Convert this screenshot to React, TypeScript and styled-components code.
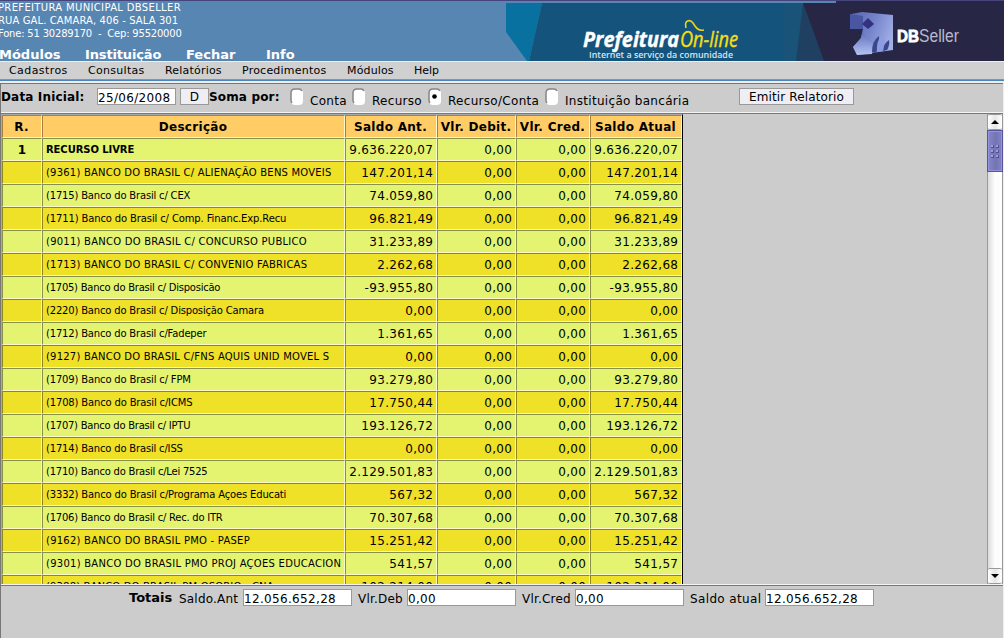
import React from "react";
import styled, { createGlobalStyle } from "styled-components";

const Global = createGlobalStyle`
  * { box-sizing: border-box; }
  body { margin: 0; overflow: hidden; background: #ccc; }
`;

const Page = styled.div`
  display: flex;
  flex-direction: column;
  width: 1004px;
  height: 638px;
  overflow: hidden;
  background: #ccc;
  color: #000;
  font: 13px/16px "DejaVu Sans", Verdana, sans-serif;
  white-space: pre;
`;

const Banner = styled.header`
  display: flex;
  justify-content: space-between;
  height: 61px;
  flex: none;
  border-top: 1px solid #45457b;
  background: #5886b2;
  color: #fff;
`;

const BannerInfo = styled.div`
  display: flex;
  flex-direction: column;
  margin-left: -1px;
`;

const Address = styled.div`
  height: 47px;
  flex: none;
  margin-left: -1px;
  font-size: 10px;
  line-height: 13px;
`;

const AddressLine = styled.div<{ $ls: number }>`
  letter-spacing: ${(p) => p.$ls}px;
`;

const MainMenu = styled.nav`
  display: flex;
  height: 13px;
  font-weight: bold;
  font-size: 13px;
  line-height: 14px;
`;

const MainItem = styled.span<{ $w: number; $ls?: number }>`
  width: ${(p) => p.$w}px;
  letter-spacing: ${(p) => p.$ls ?? 0}px;
`;

const SubMenu = styled.nav`
  display: flex;
  height: 19px;
  flex: none;
  padding: 1px 0 0 9px;
  border-top: 1px solid #eee;
  border-bottom: 1px solid #929292;
  background: #d0d0d0;
  font-size: 11px;
  line-height: 16px;
`;

const SubItem = styled.span<{ $w: number; $ls?: number }>`
  width: ${(p) => p.$w}px;
  letter-spacing: ${(p) => p.$ls ?? 0}px;
`;

const Divider = styled.div`
  height: 3px;
  flex: none;
  border-top: 1px solid #4c84b8;
  background: #eee;
`;

const Frame = styled.main`
  display: flex;
  flex-direction: column;
  flex: 1;
  min-height: 0;
  border-left: 1px solid #777;
  border-right: 1px solid #eee;
`;

const Toolbar = styled.form`
  display: flex;
  height: 30px;
  flex: none;
  border-top: 1px solid #777;
  border-bottom: 1px solid #f4f4f4;
`;

const ToolLabel = styled.b<{ $w: number }>`
  width: ${(p) => p.$w}px;
  padding-top: 5px;
  font-size: 12px;
  letter-spacing: 0.16px;
`;

const Field = styled.input<{ $w: number }>`
  width: ${(p) => p.$w}px;
  height: 17px;
  padding: 2px 0 0;
  border: 1px solid #999;
  border-radius: 0;
  outline: 0;
  background: #fff;
  color: #000;
  font: 12px/13px "DejaVu Sans", sans-serif;
  letter-spacing: 0.33px;
`;

const DateField = styled(Field)`
  margin: 4px 4px 0 0;
`;

const Button = styled.button<{ $w: number; $ml?: number }>`
  width: ${(p) => p.$w}px;
  height: 17px;
  margin: 4px 0 0 ${(p) => p.$ml ?? 0}px;
  padding: 2px 0 0;
  border: 1px solid #999;
  border-radius: 0;
  background: #eeeef4;
  color: #000;
  font: 12px/13px "DejaVu Sans", sans-serif;
  letter-spacing: 0.12px;
`;

const Option = styled.label<{ $w: number }>`
  display: flex;
  gap: 6px;
  width: ${(p) => p.$w}px;
  padding-top: 4px;
`;

const Radio = styled.span`
  display: block;
  width: 14px;
  height: 17px;
  svg { display: block; }
`;

const OptionText = styled.span`
  padding-top: 5px;
  font-size: 12px;
  letter-spacing: 0.3px;
`;

const Viewport = styled.section`
  display: flex;
  justify-content: space-between;
  height: 471px;
  flex: none;
  overflow: hidden;
  border-top: 1px solid #777;
`;

const Table = styled.div`
  width: 682px;
  height: 470px;
  overflow: hidden;
  border-top: 1px solid #aaa;
  border-left: 1px solid #aaa;
  border-right: 1px solid #000;
`;

const Row = styled.div`
  display: grid;
  grid-template-columns: 40px 303px 92px 79px 74px 92px;
  height: 23px;
`;

type Tone = "head" | "odd" | "even";
const fills: Record<Tone, string> = { head: "#ffcc66", odd: "#e4f471", even: "#efe028" };
const shades: Record<Tone, string> = { head: "#a87f3c", odd: "#87914a", even: "#8f861f" };

const Cell = styled.div<{ $tone: Tone; $align?: string; $bold?: boolean }>`
  overflow: hidden;
  padding: 3px 2.7px 0 3px;
  border: 1px solid;
  border-color: ${(p) => `${shades[p.$tone]} #fbf8d0 #fbf8d0 ${shades[p.$tone]}`};
  background: ${(p) => fills[p.$tone]};
  text-align: ${(p) => p.$align ?? "right"};
  font-weight: ${(p) => (p.$bold ? "bold" : "normal")};
  font-size: 12px;
  letter-spacing: 0.33px;
`;

const HeadCell = styled(Cell)`
  padding: 3px 1px 0 0;
  letter-spacing: 0.3px;
`;

const Description = styled(Cell)<{ $ls?: number }>`
  padding-right: 0;
  font-size: 10px;
  letter-spacing: ${(p) => p.$ls ?? 0}px;
`;

const Scrollbar = styled.div`
  display: flex;
  flex-direction: column;
  width: 16px;
  height: 470px;
  border-right: 1px solid #999;
  border-left: 1px solid #999;
  background: linear-gradient(90deg, #ddd, #fdfdfd 50%);
`;

const Arrow = styled.div`
  display: flex;
  align-items: center;
  justify-content: center;
  height: 16px;
  flex: none;
  border: solid #999;
  border-width: 1px 0;
  border-radius: 2px;
  background: linear-gradient(90deg, #fff, #e6e6e6 50%, #fff);
`;

const Thumb = styled.div`
  display: flex;
  align-items: center;
  justify-content: center;
  height: 42px;
  margin: 0 -1px;
  border: 1px solid #55559c;
  box-shadow: inset 0 0 0 1px #9494dc;
  background: linear-gradient(90deg, #8686cc, #7474b4 55%, #8282c6);
`;

const Track = styled.div`
  flex: 1;
`;

const Totals = styled.footer`
  display: flex;
  flex: 1;
  margin-top: 1px;
  padding: 3px 0 0 128px;
  border-top: 1px solid #777;
  box-shadow: 0 -1px #f4f4f4;
`;

const TotalsTitle = styled.b`
  width: 50px;
  padding-top: 1px;
  font-size: 13px;
`;

const TotalLabel = styled.span<{ $w: number; $ls?: number }>`
  width: ${(p) => p.$w}px;
  padding-top: 2px;
  font-size: 12px;
  letter-spacing: ${(p) => p.$ls ?? 0.2}px;
`;

const TotalField = styled(Field)`
  margin-right: 6px;
`;

type Entry = [string, string, number];
const entries: Entry[] = [
  ["(9361) BANCO DO BRASIL C/ ALIENAÇÃO BENS MOVEIS", "147.201,14", 0.21],
  ["(1715) Banco do Brasil c/ CEX", "74.059,80", -0.18],
  ["(1711) Banco do Brasil c/ Comp. Financ.Exp.Recu", "96.821,49", -0.13],
  ["(9011) BANCO DO BRASIL C/ CONCURSO PUBLICO", "31.233,89", 0.24],
  ["(1713) BANCO DO BRASIL C/ CONVENIO FABRICAS", "2.262,68", 0.22],
  ["(1705) Banco do Brasil c/ Disposicão", "-93.955,80", -0.25],
  ["(2220) Banco do Brasil c/ Disposição Camara", "0,00", -0.18],
  ["(1712) Banco do Brasil c/Fadeper", "1.361,65", -0.18],
  ["(9127) BANCO DO BRASIL C/FNS AQUIS UNID MOVEL S", "0,00", 0.21],
  ["(1709) Banco do Brasil c/ FPM", "93.279,80", -0.17],
  ["(1708) Banco do Brasil c/ICMS", "17.750,44", -0.16],
  ["(1707) Banco do Brasil c/ IPTU", "193.126,72", -0.25],
  ["(1714) Banco do Brasil c/ISS", "0,00", -0.18],
  ["(1710) Banco do Brasil c/Lei 7525", "2.129.501,83", -0.23],
  ["(3332) Banco do Brasil c/Programa Açoes Educati", "567,32", -0.16],
  ["(1706) Banco do Brasil c/ Rec. do ITR", "70.307,68", -0.24],
  ["(9162) BANCO DO BRASIL PMO - PASEP", "15.251,42", 0.23],
  ["(9301) BANCO DO BRASIL PMO PROJ AÇOES EDUCACION", "541,57", 0.26],
  ["(9388) BANCO DO BRASIL PM OSORIO - CNA", "102.214,00", 0.16],
];

const headings = ["R.", "Descrição", "Saldo Ant.", "Vlr. Debit.", "Vlr. Cred.", "Saldo Atual"];

function BannerArt() {
  return (
    <svg width="498" height="60" viewBox="506 1 498 60">
      <defs>
        <linearGradient id="cube" x1="0" y1=".2" x2="1" y2=".6">
          <stop offset="0" stopColor="#5a68b4" />
          <stop offset=".5" stopColor="#7684cc" />
          <stop offset="1" stopColor="#a3b0e6" />
        </linearGradient>
        <linearGradient id="lower" x1="0" y1="0" x2="0" y2="1">
          <stop offset="0" stopColor="#5365b4" />
          <stop offset="1" stopColor="#b4c2f2" />
        </linearGradient>
        <filter id="soft"><feGaussianBlur stdDeviation=".6" /></filter>
      </defs>
      <path d="M506 3H542L529 61H527L506 32Z" fill="#08719f" />
      <path d="M542 3H836V61H529Z" fill="#14547c" />
      <path d="M784 3H804L796 61H784Z" fill="#195478" />
      <path d="M803 3L824 61H796Z" fill="#204061" />
      <path d="M803 3H836V1H1004V61H824Z" fill="#272644" />
      <text x="583" y="46.5" fontFamily="Open Sans" fontSize="21" fontWeight="700" fontStyle="italic" fill="#fff" stroke="#fff" strokeWidth=".4" textLength="96" lengthAdjust="spacingAndGlyphs">Prefeitura</text>
      <text x="680" y="46.5" fontFamily="Open Sans" fontSize="21" fontStyle="italic" fill="#f5df13" stroke="#f5df13" strokeWidth=".4" textLength="58" lengthAdjust="spacingAndGlyphs">On-line</text>
      <path d="M686 28C684 20 690 19 693 23C696 28 698 31 704 30" fill="none" stroke="#e9d417" strokeWidth="1.6" />
      <text x="589" y="57.5" fontFamily="Open Sans" fontSize="9.5" fontWeight="600" fill="#d7e5ee" textLength="144" lengthAdjust="spacingAndGlyphs">Internet a serviço da comunidade</text>
      <g filter="url(#soft)">
        <path d="M851 14L862 12L893 15L893 50L857 55L853 47L861 38L863 29L850 29Z" fill="url(#cube)" />
        <path d="M850 14L863 16V29L850 29Z" fill="#4857a2" />
        <path d="M863 29L861 38L853 47L857 55L872 54L873 43L864 38Z" fill="url(#lower)" />
        <path d="M868 18L874 24L868 29L862 24Z" fill="#30307e" />
        <path d="M872 52Q872 41 879 36Q880 43 876 53Z" fill="#3a468c" />
        <path d="M883 51Q883 44 889 40Q890 45 887 50Z" fill="#3a468c" />
        <path d="M877 52Q876 42 881 36L885 40L883 51Z" fill="#8d9ce0" />
      </g>
      <text x="897" y="42" fontFamily="Liberation Sans" fontSize="17" fontWeight="700" fill="#fff" stroke="#fff" strokeWidth=".8" textLength="22" lengthAdjust="spacingAndGlyphs">DB</text>
      <text x="919" y="42" fontFamily="Liberation Sans" fontSize="18" fill="#b9b8cd" textLength="40" lengthAdjust="spacingAndGlyphs">Seller</text>
    </svg>
  );
}

function RadioMark({ checked = false }: { checked?: boolean }) {
  return (
    <Radio>
      <svg width="14" height="17">
        <rect x="1" y="1" width="12" height="16" rx="4" fill="#fff" />
        <path d="M2 15Q1 14 1 12V5Q1 1 5 1H9Q11 1 12 3" fill="none" stroke="#858585" strokeWidth="1.5" />
        {checked && <circle cx="6.5" cy="8.5" r="2.3" fill="#000" />}
      </svg>
    </Radio>
  );
}

export default function App() {
  return (
    <Page>
      <Global />
      <Banner>
        <BannerInfo>
          <Address>
            <AddressLine $ls={0.34}>PREFEITURA MUNICIPAL DBSELLER</AddressLine>
            <AddressLine $ls={0.1}>RUA GAL. CAMARA, 406 - SALA 301</AddressLine>
            <AddressLine $ls={-0.2}>{"Fone: 51 30289170  -  Cep: 95520000"}</AddressLine>
          </Address>
          <MainMenu>
            <MainItem $w={86}>Módulos</MainItem>
            <MainItem $w={101} $ls={-0.15}>Instituição</MainItem>
            <MainItem $w={80}>Fechar</MainItem>
            <MainItem $w={40}>Info</MainItem>
          </MainMenu>
        </BannerInfo>
        <BannerArt />
      </Banner>
      <SubMenu>
        <SubItem $w={79} $ls={0.42}>Cadastros</SubItem>
        <SubItem $w={77} $ls={0.3}>Consultas</SubItem>
        <SubItem $w={77} $ls={0.2}>Relatórios</SubItem>
        <SubItem $w={105} $ls={0.22}>Procedimentos</SubItem>
        <SubItem $w={67} $ls={0.15}>Módulos</SubItem>
        <SubItem $w={40}>Help</SubItem>
      </SubMenu>
      <Divider />
      <Frame>
        <Toolbar>
          <ToolLabel $w={96}>Data Inicial:</ToolLabel>
          <DateField $w={79} defaultValue="25/06/2008" />
          <Button type="button" $w={29}>D</Button>
          <ToolLabel $w={81}>Soma por:</ToolLabel>
          <Option $w={62}><RadioMark /><OptionText>Conta</OptionText></Option>
          <Option $w={76}><RadioMark /><OptionText>Recurso</OptionText></Option>
          <Option $w={117}><RadioMark checked /><OptionText>Recurso/Conta</OptionText></Option>
          <Option $w={150}><RadioMark /><OptionText>Instituição bancária</OptionText></Option>
          <Button type="button" $w={115} $ml={44}>Emitir Relatorio</Button>
        </Toolbar>
        <Viewport>
          <Table>
            <Row>
              {headings.map((h) => (
                <HeadCell key={h} $tone="head" $align="center" $bold>{h}</HeadCell>
              ))}
            </Row>
            <Row>
              <Cell $tone="odd" $align="center" $bold>1</Cell>
              <Description $tone="odd" $align="left" $bold $ls={-0.08}>RECURSO LIVRE</Description>
              <Cell $tone="odd">9.636.220,07</Cell>
              <Cell $tone="odd">0,00</Cell>
              <Cell $tone="odd">0,00</Cell>
              <Cell $tone="odd">9.636.220,07</Cell>
            </Row>
            {entries.map(([name, value, ls], i) => {
              const tone: Tone = i % 2 ? "odd" : "even";
              return (
                <Row key={name}>
                  <Cell $tone={tone} />
                  <Description $tone={tone} $align="left" $ls={ls}>{name}</Description>
                  <Cell $tone={tone}>{value}</Cell>
                  <Cell $tone={tone}>0,00</Cell>
                  <Cell $tone={tone}>0,00</Cell>
                  <Cell $tone={tone}>{value}</Cell>
                </Row>
              );
            })}
          </Table>
          <Scrollbar>
            <Arrow><svg width="8" height="4"><path d="M0 4L4 0L8 4Z" /></svg></Arrow>
            <Thumb>
              <svg width="8" height="13">
                {[0, 5, 10].map((y) => [0, 5].map((x) => (
                  <g key={`${x}-${y}`}>
                    <rect x={x} y={y} width="3" height="3" fill="#50509a" />
                    <rect x={x} y={y} width="2" height="2" fill="#a0a0dc" />
                  </g>
                )))}
              </svg>
            </Thumb>
            <Track />
            <Arrow><svg width="8" height="4"><path d="M0 0H8L4 4Z" /></svg></Arrow>
          </Scrollbar>
        </Viewport>
        <Totals>
          <TotalsTitle>Totais</TotalsTitle>
          <TotalLabel $w={64}>Saldo.Ant</TotalLabel>
          <TotalField $w={109} defaultValue="12.056.652,28" />
          <TotalLabel $w={49}>Vlr.Deb</TotalLabel>
          <TotalField $w={109} defaultValue="0,00" />
          <TotalLabel $w={53}>Vlr.Cred</TotalLabel>
          <TotalField $w={109} defaultValue="0,00" />
          <TotalLabel $w={75} $ls={0.36}>Saldo atual</TotalLabel>
          <TotalField $w={109} defaultValue="12.056.652,28" />
        </Totals>
      </Frame>
    </Page>
  );
}
